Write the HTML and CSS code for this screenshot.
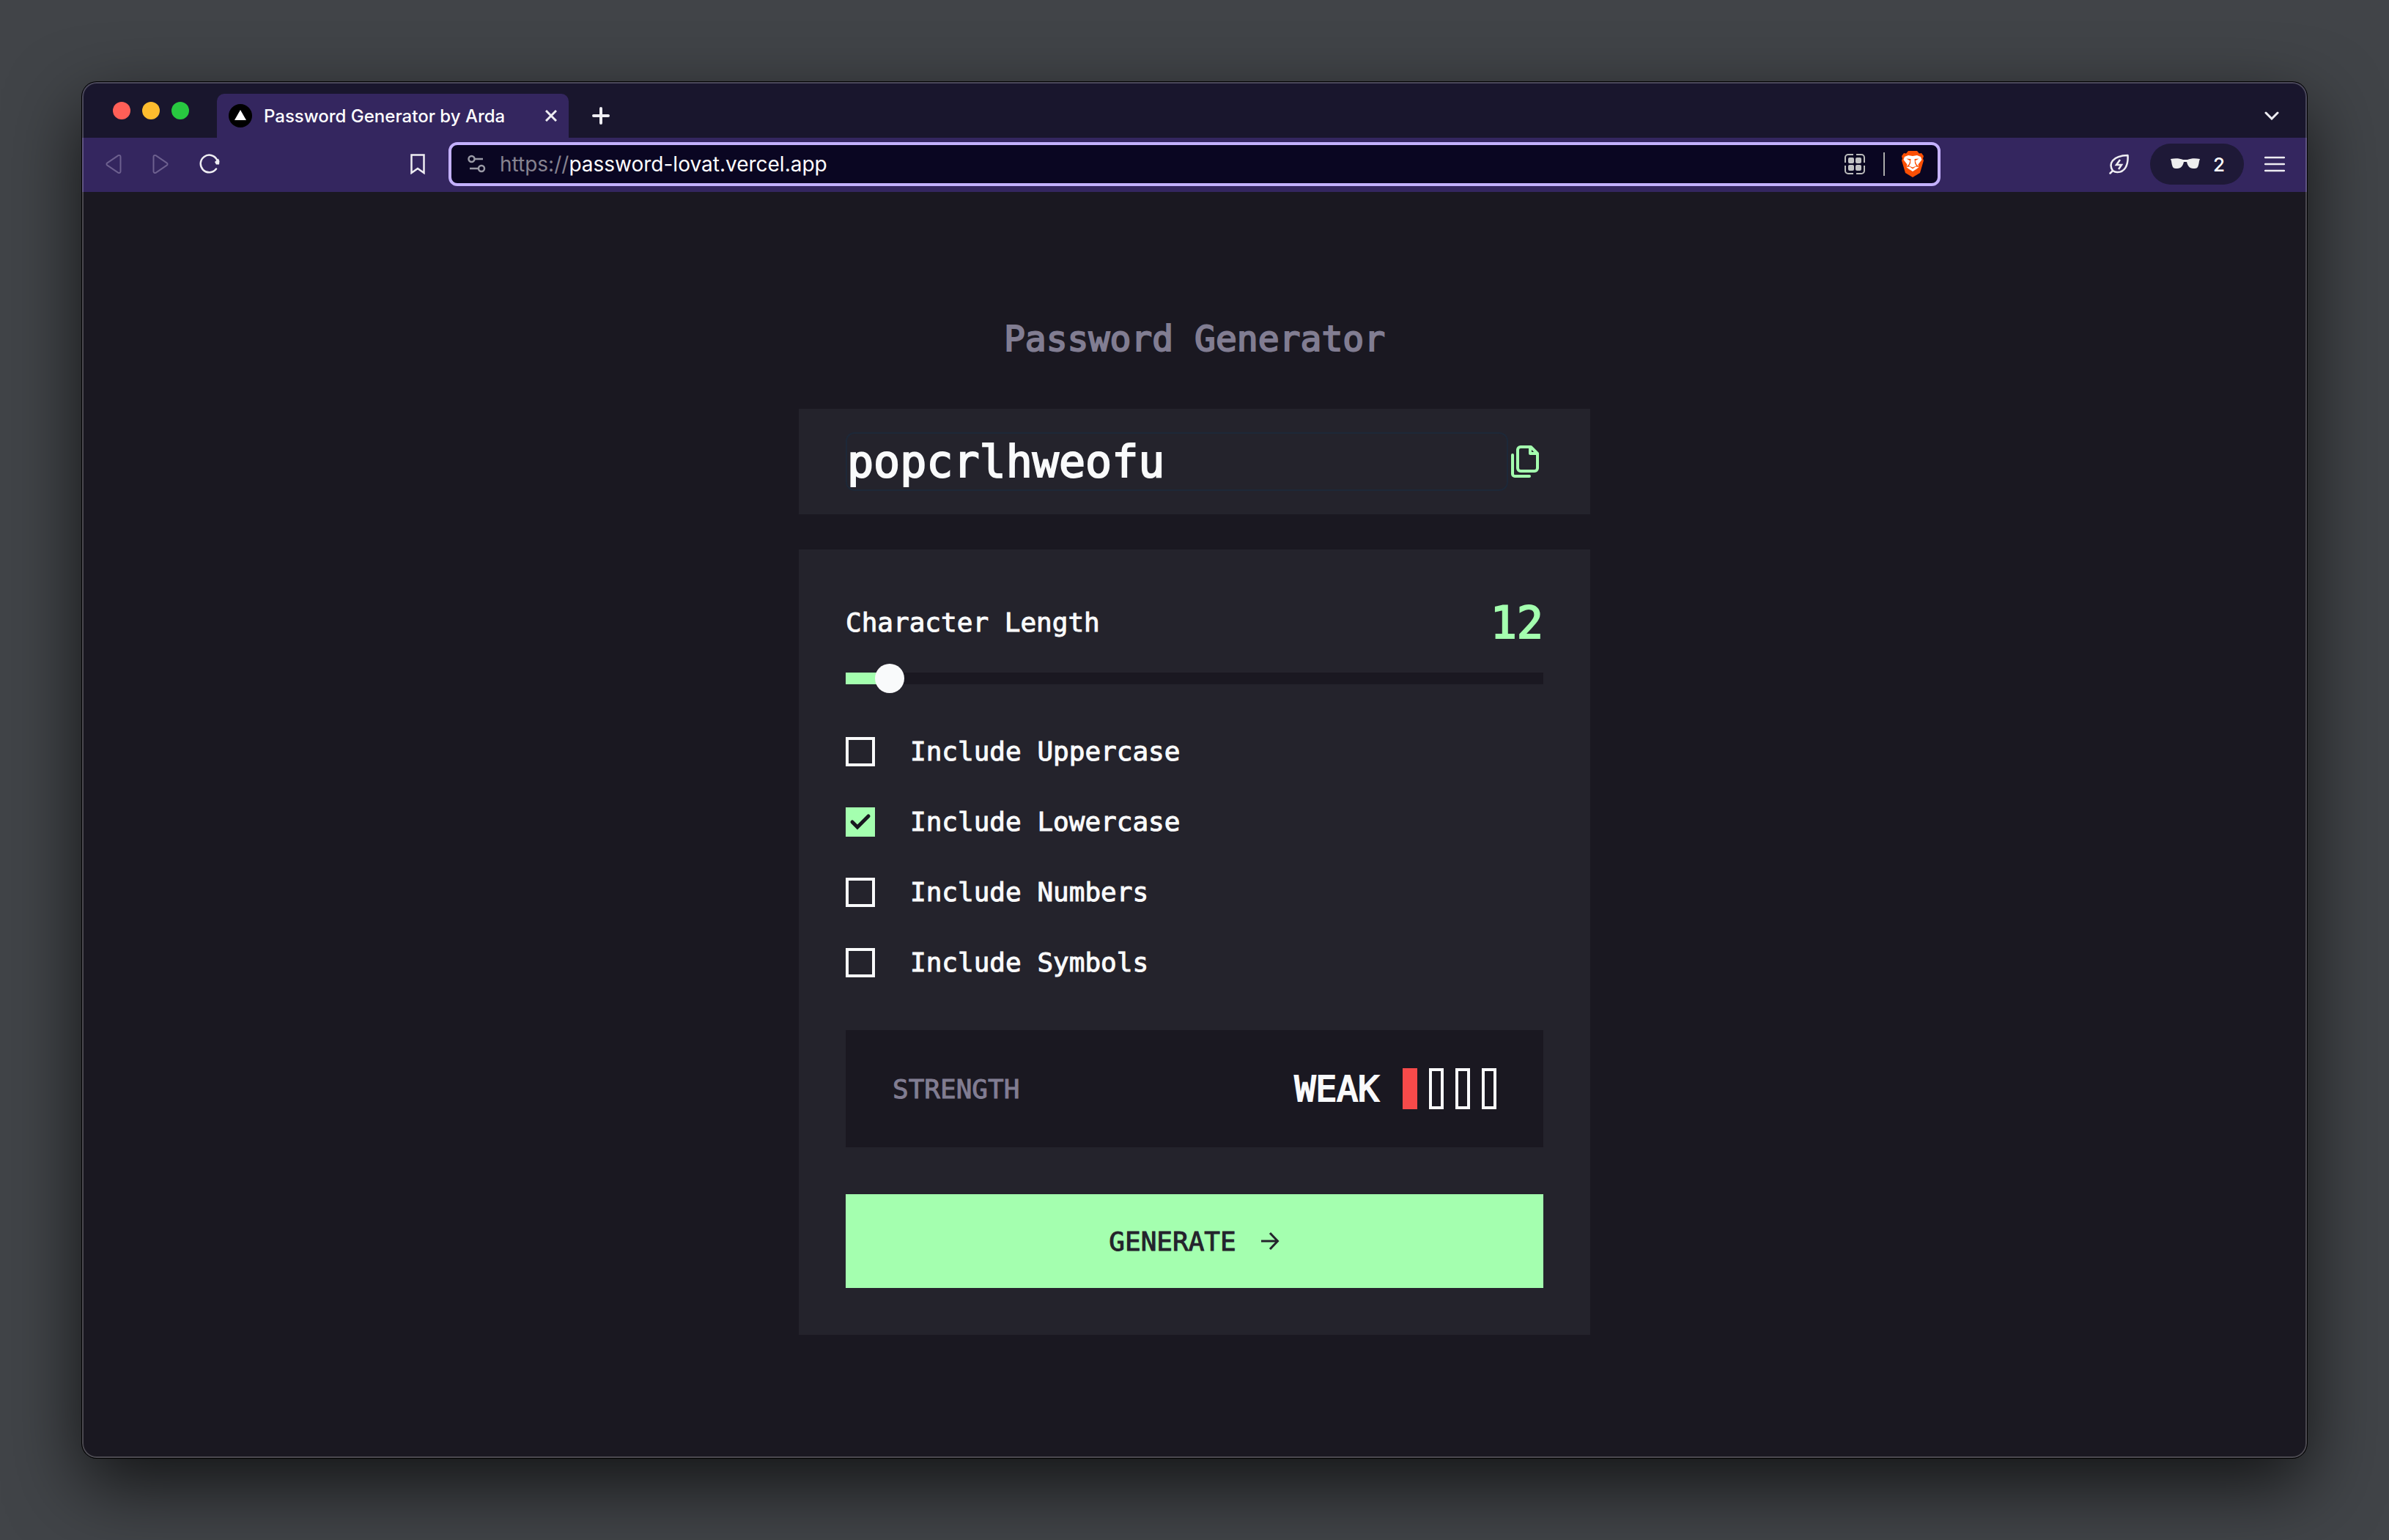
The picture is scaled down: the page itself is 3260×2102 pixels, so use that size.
FILE: index.html
```html
<!DOCTYPE html>
<html lang="en">
<head>
<meta charset="utf-8">
<title>Password Generator by Arda</title>
<link rel="stylesheet" href="styles.css">
</head>
<body>
<div class="window">
  <header class="tabstrip">
    <div class="lights"><span class="light red"></span><span class="light yellow"></span><span class="light green"></span></div>
    <div class="tab">
      <svg class="favicon" viewBox="0 0 32 32"><circle cx="16" cy="16" r="16"/><path d="M16 8l8 14H8z" fill="#fff"/></svg>
      <span class="tab-title">Password Generator by Arda</span>
      <button class="icon-btn" aria-label="Close tab"><svg width="16" height="16" viewBox="0 0 16 16"><path d="M1 1l14 14M15 1L1 15" stroke-width="3"/></svg></button>
    </div>
    <button class="icon-btn new-tab" aria-label="New tab"><svg width="24" height="24" viewBox="0 0 24 24"><path d="M12 2v20M2 12h20" stroke-width="4" stroke-linecap="round"/></svg></button>
    <button class="icon-btn tab-search" aria-label="Search tabs"><svg width="20" height="12" viewBox="0 0 20 12"><path d="M2 2l8 8 8-8" stroke-width="3" stroke-linecap="round"/></svg></button>
  </header>
  <nav class="toolbar">
    <div class="nav-buttons">
      <button class="icon-btn dim" aria-label="Back"><svg width="22" height="28" viewBox="0 0 22 28"><path d="M17.500 2.200L2.400 12.300a2 2 0 0 0 0 3.400L17.500 25.800a2 2 0 0 0 3-1.700V3.900a2 2 0 0 0-3-1.700z" stroke-width="2"/></svg></button>
      <button class="icon-btn dim" aria-label="Forward"><svg width="22" height="28" viewBox="0 0 22 28"><path d="M4.500 2.200L19.600 12.300a2 2 0 0 1 0 3.400L4.500 25.800a2 2 0 0 1-3-1.700V3.900a2 2 0 0 1 3-1.700z" stroke-width="2"/></svg></button>
      <button class="icon-btn" aria-label="Reload"><svg width="28" height="28" viewBox="0 0 28 28"><path d="M23 20.500A11.800 11.800 0 1 1 24 8" stroke-width="2.500" stroke-linecap="round"/><path d="M21 11l5-4.500 1.500 3.500-.5 4.500h-4z" fill="#eeedf2" stroke="none"/></svg></button>
    </div>
    <button class="icon-btn bookmark" aria-label="Bookmark"><svg width="20" height="28" viewBox="0 0 20 28"><path d="M1.500 1.500h17v24.500L10 20l-8.500 6z" stroke-width="2.500"/></svg></button>
    <div class="address">
      <svg width="26" height="26" viewBox="0 0 26 26"><g fill="none" stroke="#9a9aa6" stroke-width="2.500"><circle cx="5.500" cy="6" r="4"/><path d="M10 6h11M3 19h11"/><circle cx="19" cy="19" r="4"/></g></svg>
      <span class="url"><span class="scheme">https://</span>password-lovat.vercel.app</span>
      <svg width="30" height="30" viewBox="0 0 30 30"><path d="M13 2H6a4 4 0 0 0-4 4v7M17 2h7a4 4 0 0 1 4 4v7M13 28H6a4 4 0 0 1-4-4v-7M17 28h7a4 4 0 0 0 4-4v-7" fill="none" stroke="#bbb" stroke-width="2"/><g fill="#c2c2c4"><rect x="6" y="6" width="8" height="8" rx="2"/><rect x="16" y="6" width="8" height="8" rx="2"/><rect x="6" y="16" width="8" height="8" rx="2"/><rect x="16" y="16" width="8" height="8" rx="2"/></g></svg>
      <span class="divider"></span>
      <svg width="32" height="36" viewBox="0 0 32 36"><path d="M10 0h12l3 3.500 3-.5 3 4-1 3.500L31 13l-5 17-10 6-10-6L1 13l1-2.500L1 7l3-4 3 .5z" fill="#fb4f04"/><path d="M5 8l5-2 6 1 6-1 5 2 1.500 4-5 6.500 1 3.500-3 2.500L16 28l-5.500-3.500-3-2.500 1-3.500-5-6.500z" fill="#fff"/><path d="M7.500 10.500l6 .5-.5 6-2 3.500 5 2 5-2-2-3.500-.5-6 6-.5-5 3 1.500 4.500L25 22l-5-.5-4 3-4-3-5 .5 4-4 1.500-4.500z" fill="#fb4f04"/></svg>
    </div>
    <div class="actions">
      <button class="icon-btn" aria-label="Energy saver"><svg width="28" height="28" viewBox="0 0 28 28"><path d="M1.500 26.500l3.500-3.500C-1 14 4 2.500 25.500 2 26.500 16 21 25.500 11 25c-3 0-4.500-1-6-2" stroke-width="2.500" stroke-linecap="round" stroke-linejoin="round"/><path d="M15 8l-5 7h7l-4 6" stroke-width="2.500"/></svg></button>
      <button class="profile" aria-label="2 private windows"><svg width="40" height="16" viewBox="0 0 40 16"><path d="M0 1c6-1 12-1 17 1h6c5-2 11-2 17-1l-1 3c-1 7-2 10-6 10-6 0-9-1-11-9h-4c-2 8-5 9-11 9C3 14 2 11 1 4z" fill="#eee"/></svg><span>2</span></button>
      <button class="icon-btn" aria-label="Menu"><svg width="28" height="22" viewBox="0 0 28 22"><path d="M1 2h26M1 11h26M1 20h26" stroke-width="2.500" stroke-linecap="round"/></svg></button>
    </div>
  </nav>
  <main class="page">
    <h1 class="title">Password Generator</h1>
    <section class="card output">
      <input class="password" type="text" value="popcrlhweofu" aria-label="Password" readonly>
      <button class="copy" aria-label="Copy password"><svg width="40" height="46" viewBox="0 0 40 46"><g fill="none" stroke="#a4ffaf" stroke-width="4" stroke-linecap="round" stroke-linejoin="round"><path d="M14 3h14l9 9v20a4 4 0 0 1-4 4H14a4 4 0 0 1-4-4V7a4 4 0 0 1 4-4z"/><path d="M27 4v8h9M3 14v26a3 3 0 0 0 3 3h20"/></g></svg></button>
    </section>
    <form class="card settings">
      <div class="length-row"><label for="length">Character Length</label><output class="length" for="length">12</output></div>
      <input class="slider" id="length" type="range" min="8" max="99" value="12">
      <div class="options">
        <label class="option"><input type="checkbox">Include Uppercase</label>
        <label class="option"><input type="checkbox" checked>Include Lowercase</label>
        <label class="option"><input type="checkbox">Include Numbers</label>
        <label class="option"><input type="checkbox">Include Symbols</label>
      </div>
      <div class="strength">
        <span class="strength-label">STRENGTH</span>
        <span class="level">WEAK</span>
        <span class="bars"><i class="bar on"></i><i class="bar"></i><i class="bar"></i><i class="bar"></i></span>
      </div>
      <button class="generate" type="button">GENERATE<svg width="26" height="24" viewBox="0 0 26 24"><path d="M0 12h22M12 1l10.500 11L12 23" fill="none" stroke="#24232c" stroke-width="3"/></svg></button>
    </form>
  </main>
</div>
</body>
</html>
```
FILE: styles.css
```css
* { box-sizing: border-box; }
body {
  margin: 0;
  min-height: 100vh;
  padding: 112px;
  display: flex;
  background: #414448;
  font-family: Inter, "Liberation Sans", sans-serif;
  color: #fff;
}
button { margin: 0; padding: 0; border: 0; background: none; color: inherit; font: inherit; display: flex; align-items: center; cursor: pointer; }
svg { display: block; flex: none; }
.window {
  position: relative;
  flex: 1;
  display: flex;
  flex-direction: column;
  border-radius: 20px;
  overflow: hidden;
  background: #1a1821;
  box-shadow: 0 0 0 1px #000, 0 36px 100px rgba(0, 0, 0, .7);
}
.window::after {
  content: "";
  position: absolute;
  inset: 0;
  border: 2px solid rgba(255, 255, 255, .22);
  border-radius: 20px;
  pointer-events: none;
}
.icon-btn svg { fill: none; stroke: #eeedf2; }
.dim svg { stroke: #6d608f; }

.tabstrip { display: flex; height: 76px; padding: 16px 38px 0 42px; background: #19162d; }
.lights { display: flex; gap: 16px; width: 142px; padding-top: 11px; }
.light { width: 24px; height: 24px; border-radius: 50%; }
.red { background: #ff5f57; }
.yellow { background: #febc2e; }
.green { background: #28c840; }
.tab { display: flex; align-items: center; width: 480px; padding: 0 16px; border-radius: 10px 10px 0 0; background: #34265f; }
.favicon { width: 32px; height: 32px; }
.tab-title { flex: 1; padding-left: 16px; font-size: 24px; font-weight: 500; white-space: nowrap; }
.new-tab { margin-left: 32px; }
.tab-search { margin-left: auto; }

.toolbar { display: flex; align-items: center; height: 74px; padding: 0 30px 2px 32px; background: #34265f; }
.nav-buttons { display: flex; gap: 42px; }
.bookmark { margin-left: 260px; }
.address {
  display: flex;
  align-items: center;
  flex: 1;
  height: 60px;
  margin: 0 230px 0 32px;
  padding: 0 18px 0 22px;
  border: 4px solid #c4b1ff;
  border-radius: 12px;
  background: #0a0622;
}
.url { flex: 1; padding-left: 18px; font-size: 28px; }
.scheme { color: #85828f; }
.divider { width: 2px; height: 32px; margin: 0 22px 0 24px; background: #aaa; }
.actions { display: flex; align-items: center; gap: 28px; }
.profile { width: 128px; height: 56px; padding-left: 28px; gap: 18px; border-radius: 28px; background: #1e1937; font-size: 26px; font-weight: 500; }

/* The outline gives the monospace face a medium weight. */
.page { flex: 1; display: flex; flex-direction: column; align-items: center; padding-top: 168px; font-family: "DejaVu Sans Mono", "Liberation Mono", monospace; font-size: 36px; color: #f9fafb; -webkit-text-stroke: 1px; }
.title, .password, .length, .level { -webkit-text-stroke: 2px; }
.title { margin: 0 0 64px; font-size: 48px; line-height: 64px; font-weight: 400; color: #817d92; }
.card { width: 1080px; max-width: 100%; background: #24232c; }
.output { display: flex; align-items: center; height: 144px; margin-bottom: 48px; padding: 0 64px; }
.password {
  flex: 1;
  min-width: 0;
  height: 80px;
  padding: 0;
  border: 2px solid #1d2838;
  border-radius: 12px;
  outline: 0;
  background: none;
  color: inherit;
  font: inherit;
  font-size: 60px;
}
.copy { width: 48px; padding-left: 3px; }
.settings { display: flex; flex-direction: column; padding: 64px; }
.length-row { display: flex; align-items: center; justify-content: space-between; line-height: 72px; }
.length { font-size: 60px; color: #a4ffaf; }
.slider {
  appearance: none;
  height: 40px;
  margin: 20px 0 60px;
  background: linear-gradient(90deg, #a4ffaf 60px, #1a1821 60px) center / 100% 16px no-repeat;
}
.slider::-webkit-slider-thumb { appearance: none; width: 40px; height: 40px; border-radius: 50%; background: #f9fafb; }
.options { display: flex; flex-direction: column; gap: 56px; }
.option { display: flex; align-items: center; gap: 48px; line-height: 40px; }
.option input { appearance: none; width: 40px; height: 40px; margin: 0; border: 4px solid #f9fafb; }
.option input:checked {
  border-color: #a4ffaf;
  background: #a4ffaf url("data:image/svg+xml,%3Csvg xmlns='http://www.w3.org/2000/svg' viewBox='0 0 32 32'%3E%3Cpath d='M5 16l7 7L27 8' fill='none' stroke='%2318171f' stroke-width='5' stroke-linecap='round'/%3E%3C/svg%3E") center / 32px no-repeat;
}
.strength { display: flex; align-items: center; height: 160px; margin: 72px 0 64px; padding: 0 64px; background: #1a1821; }
.strength-label { flex: 1; color: #817d92; }
.level { font-size: 48px; }
.bars { display: flex; gap: 16px; margin-left: 32px; }
.bar { width: 20px; height: 56px; border: 4px solid #f9fafb; }
.bar.on { border-color: #f64a4a; background: #f64a4a; }
.generate { justify-content: center; gap: 34px; height: 128px; background: #a4ffaf; color: #24232c; }
```
